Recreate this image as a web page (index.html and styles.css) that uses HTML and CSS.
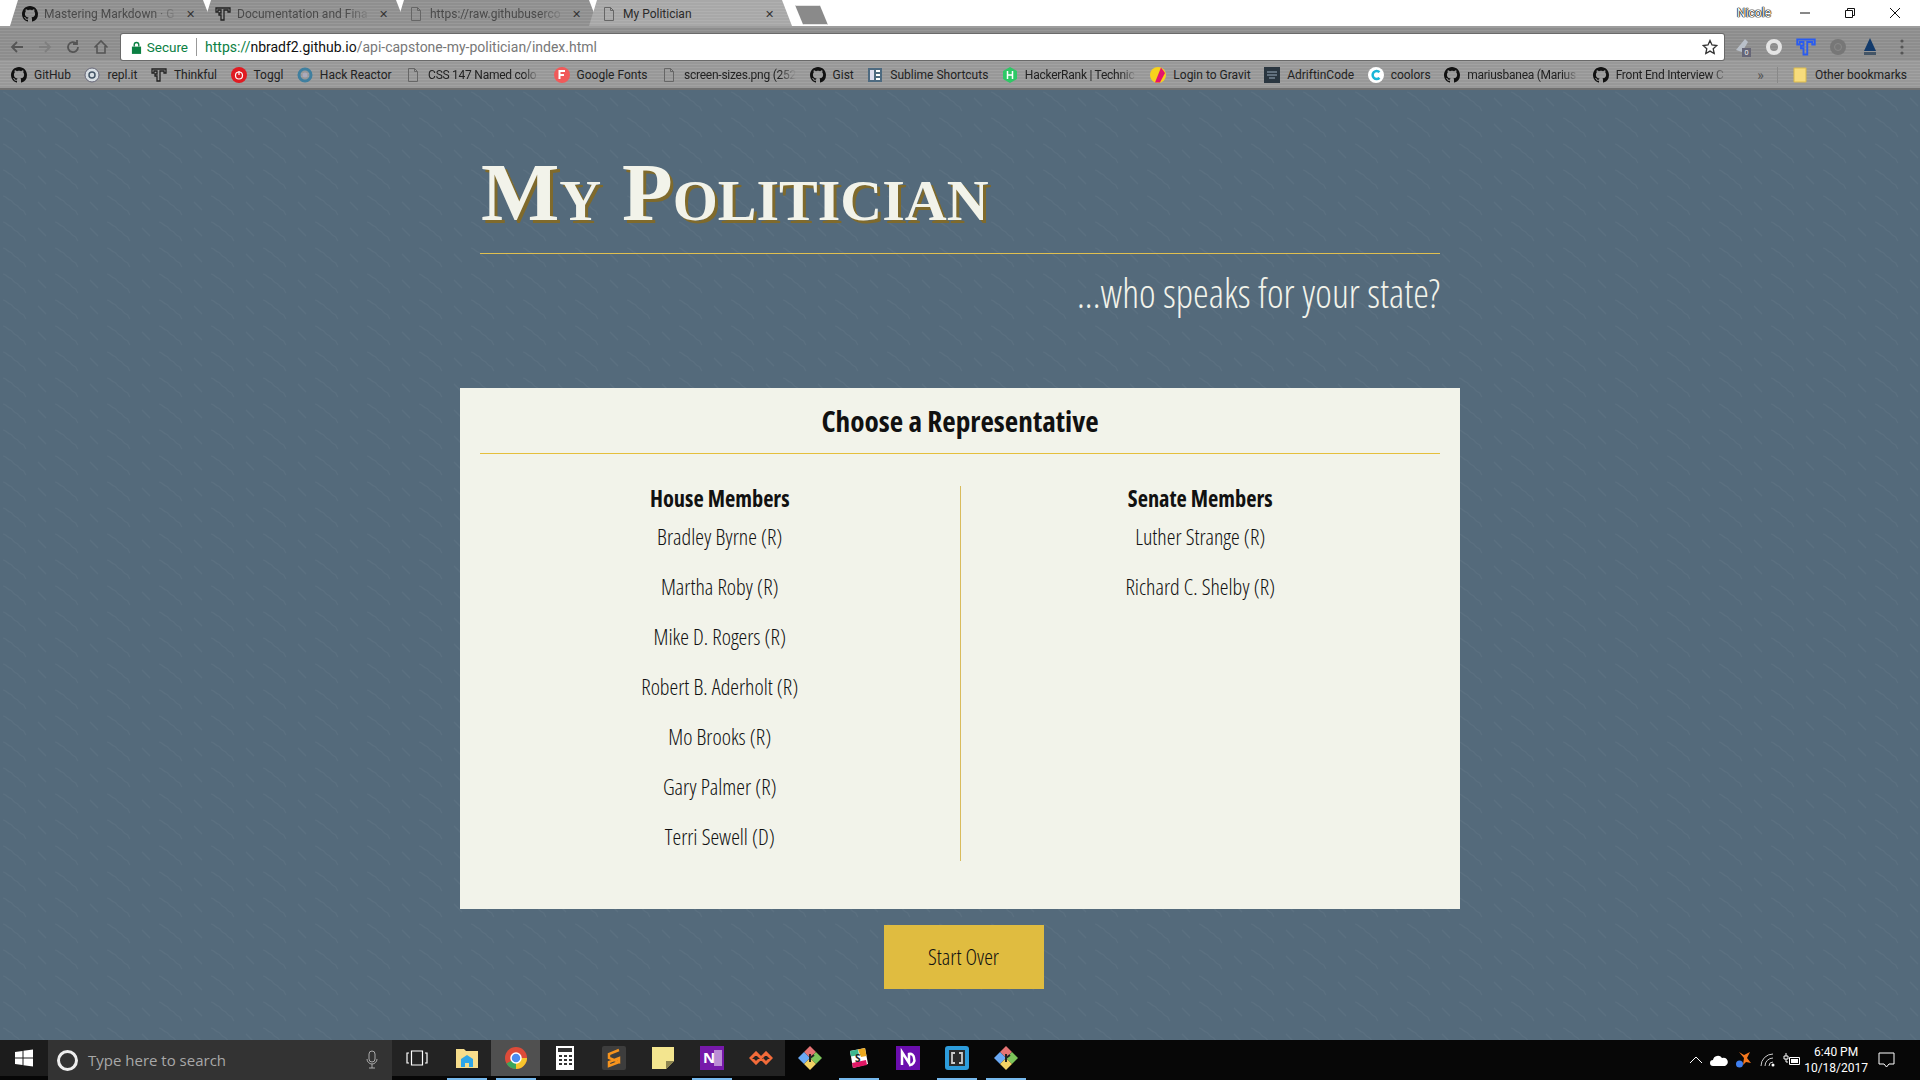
FILE: index.html
```html
<!DOCTYPE html>
<html lang="en">
<head>
<meta charset="UTF-8">
<title>My Politician</title>
<link rel="stylesheet" href="styles.css">
</head>
<body>
<svg class="defs" width="0" height="0">
    <symbol id="gh" viewBox="0 0 16 16"><path d="M8 0C3.58 0 0 3.58 0 8c0 3.54 2.29 6.53 5.47 7.59.4.07.55-.17.55-.38 0-.19-.01-.82-.01-1.49-2.01.37-2.53-.49-2.69-.94-.09-.23-.48-.94-.82-1.13-.28-.15-.68-.52-.01-.53.63-.01 1.08.58 1.23.82.72 1.21 1.87.87 2.33.66.07-.52.28-.87.51-1.07-1.78-.2-3.64-.89-3.64-3.95 0-.87.31-1.59.82-2.15-.08-.2-.36-1.02.08-2.12 0 0 .67-.21 2.2.82.64-.18 1.32-.27 2-.27s1.36.09 2 .27c1.53-1.04 2.2-.82 2.2-.82.44 1.1.16 1.92.08 2.12.51.56.82 1.27.82 2.15 0 3.07-1.87 3.75-3.65 3.95.29.25.54.73.54 1.48 0 1.07-.01 1.93-.01 2.2 0 .21.15.46.55.38A8.01 8.01 0 0 0 16 8c0-4.42-3.58-8-8-8z"/></symbol>
    <symbol id="page" viewBox="0 0 16 16"><path d="M3.5 1.5h6l3 3v10h-9z M9.500 1.500v3h3" fill="none" stroke="#666" stroke-width="1"/></symbol>
    <symbol id="thinkful" viewBox="0 0 16 16"><path d="M1 2h14v4h-2V4H9v10H6V9H4V7h2V4H3v2H1z" fill="none" stroke="currentColor" stroke-width="1.300"/></symbol>
    <symbol id="gitkraken" viewBox="0 0 24 24"><path d="M6 6L12 0l6 6-6 6z" fill="#e57373"/><path d="M12 12l6-6 6 6-6 6z" fill="#7cc45a"/><path d="M0 12l6-6 6 6-6 6z" fill="#6aa9f4"/><path d="M6 18l6-6 6 6-6 6z" fill="#f2d264"/><path d="M12 8v8M12 12l4-3" fill="none" stroke="#222" stroke-width="2"/></symbol>
</svg>

<div class="chrome">
    <div class="tabstrip">
        <div class="tab"><svg class="ico"><use href="#gh"/></svg><span class="tabtitle">Mastering Markdown · G</span><span class="x">✕</span></div>
        <div class="tab"><svg class="ico"><use href="#thinkful"/></svg><span class="tabtitle">Documentation and Fina</span><span class="x">✕</span></div>
        <div class="tab"><svg class="ico"><use href="#page"/></svg><span class="tabtitle">https://raw.githubuserco</span><span class="x">✕</span></div>
        <div class="tab active"><svg class="ico"><use href="#page"/></svg><span class="tabtitle">My Politician</span><span class="x">✕</span></div>
        <div class="newtab"></div>
        <div class="winbtns">
            <span class="user">Nicole</span>
            <svg class="wbtn" viewBox="0 0 12 12"><path d="M1 6h10" stroke="#111" fill="none"/></svg>
            <svg class="wbtn" viewBox="0 0 12 12"><path d="M1.500 3.500h7v7h-7z M3.500 3.500v-2h7v7h-2" stroke="#111" fill="none"/></svg>
            <svg class="wbtn" viewBox="0 0 12 12"><path d="M1 1l10 10M11 1L1 11" stroke="#111" fill="none"/></svg>
        </div>
    </div>

    <div class="toolbar">
        <div class="nav">
            <svg class="navico" viewBox="0 0 16 16"><path d="M14 8H3M8 3L3 8l5 5" fill="none" stroke="#555" stroke-width="1.800"/></svg>
            <svg class="navico" viewBox="0 0 16 16"><path d="M2 8h11M8 3l5 5-5 5" fill="none" stroke="#7f7f7f" stroke-width="1.800"/></svg>
            <svg class="navico" viewBox="0 0 16 16"><path d="M13 8a5 5 0 1 1-1.500-3.500M12 1v4H8" fill="none" stroke="#555" stroke-width="1.800"/></svg>
            <svg class="navico" viewBox="0 0 16 16"><path d="M1.500 8.500L8 2l6.500 6.500M4 7v7h8V7" fill="none" stroke="#555" stroke-width="1.600"/></svg>
        </div>
        <div class="omnibox">
            <svg class="lock" viewBox="0 0 12 14"><path d="M1 6h10v8H1z" fill="#0b8043"/><path d="M3.500 6V4a2.500 2.500 0 0 1 5 0v2" fill="none" stroke="#0b8043" stroke-width="1.500"/></svg>
            <span class="secure">Secure</span>
            <span class="omnisep"></span>
            <span class="url"><span class="scheme">https://</span><span class="host">nbradf2.github.io</span><span class="path">/api-capstone-my-politician/index.html</span></span>
            <svg class="star" viewBox="0 0 16 16"><path d="M8 1.500l2 4.500 4.800.5-3.600 3.200 1 4.800L8 12.100l-4.200 2.400 1-4.800L1.200 6.500 6 6z" fill="none" stroke="#333" stroke-width="1.300"/></svg>
        </div>
        <div class="exts">
            <svg class="ext" viewBox="0 0 20 20"><path d="M4 13L13 2l3 3-6 10z" fill="#b9c0c9"/><rect x="10" y="11" width="9" height="9" fill="#667"/><text class="applet badge" x="12.500" y="18">0</text></svg>
            <svg class="ext" viewBox="0 0 20 20"><circle cx="10" cy="10" r="6" fill="none" stroke="#e4e4e4" stroke-width="4"/></svg>
            <svg class="ext" viewBox="0 0 16 16"><path d="M1 2h14v4h-2V4H9v10H6V9H4V7h2V4H3v2H1z" fill="none" stroke="#2a5cf0" stroke-width="1.500"/></svg>
            <svg class="ext" viewBox="0 0 20 20"><circle cx="10" cy="10" r="8" fill="#777"/><circle cx="10" cy="10" r="3.500" fill="none" stroke="#8a8a8a"/></svg>
            <svg class="ext" viewBox="0 0 20 20"><path d="M10 1l6 13H4z" fill="#123a6b"/><rect x="4" y="15" width="12" height="3" fill="#456"/></svg>
            <svg class="ext" viewBox="0 0 20 20"><circle cx="10" cy="4" r="1.600" fill="#555"/><circle cx="10" cy="10" r="1.600" fill="#555"/><circle cx="10" cy="16" r="1.600" fill="#555"/></svg>
        </div>
    </div>

    <div class="bookmarks">
        <div class="bm"><svg class="ico"><use href="#gh"/></svg><span>GitHub</span></div>
        <div class="bm"><svg class="ico" viewBox="0 0 16 16"><circle cx="8" cy="8" r="7" fill="#d8dfe4" stroke="#667"/><circle cx="8" cy="8" r="3" fill="none" stroke="#456" stroke-width="1.500"/></svg><span>repl.it</span></div>
        <div class="bm"><svg class="ico"><use href="#thinkful"/></svg><span>Thinkful</span></div>
        <div class="bm"><svg class="ico" viewBox="0 0 16 16"><circle cx="8" cy="8" r="8" fill="#e01b22"/><circle cx="8" cy="8.500" r="3.500" fill="none" stroke="#fff" stroke-width="1.200"/><path d="M8 4v4" stroke="#fff" stroke-width="1.200"/></svg><span>Toggl</span></div>
        <div class="bm"><svg class="ico" viewBox="0 0 16 16"><circle cx="8" cy="8" r="6" fill="none" stroke="#3f7f9f" stroke-width="3"/><circle cx="8" cy="8" r="2.500" fill="#aab"/></svg><span>Hack Reactor</span></div>
        <div class="bm"><svg class="ico"><use href="#page"/></svg><span class="fade">CSS 147 Named colo</span></div>
        <div class="bm"><svg class="ico" viewBox="0 0 16 16"><circle cx="8" cy="8" r="8" fill="#f05a5a"/><path d="M5.500 12V4H11M5.500 8H10" fill="none" stroke="#fff" stroke-width="2"/></svg><span>Google Fonts</span></div>
        <div class="bm"><svg class="ico"><use href="#page"/></svg><span class="fade">screen-sizes.png (252</span></div>
        <div class="bm"><svg class="ico"><use href="#gh"/></svg><span>Gist</span></div>
        <div class="bm"><svg class="ico" viewBox="0 0 16 16"><rect x="1" y="1" width="14" height="14" fill="#4d6a80"/><rect x="3" y="3" width="4" height="10" fill="#dde"/><path d="M9 4h4M9 8h4M9 12h4" stroke="#fff" stroke-width="2"/></svg><span>Sublime Shortcuts</span></div>
        <div class="bm"><svg class="ico" viewBox="0 0 16 16"><path d="M8 0l7 4v8l-7 4-7-4V4z" fill="#2ec866"/><path d="M5.500 4v8M10.500 4v8M5.500 8h5" stroke="#fff" stroke-width="1.500"/></svg><span class="fade">HackerRank | Technic</span></div>
        <div class="bm"><svg class="ico" viewBox="0 0 16 16"><circle cx="8" cy="8" r="8" fill="#f7d21c"/><path d="M11 0.600L5 15.400 10 15.500 15 6z" fill="#e4146c"/></svg><span>Login to Gravit</span></div>
        <div class="bm"><svg class="ico" viewBox="0 0 16 16"><rect width="16" height="16" fill="#2a3640"/><path d="M3 5h10M3 8h10M5 11h6" stroke="#9ab" stroke-width="1"/></svg><span>AdriftinCode</span></div>
        <div class="bm"><svg class="ico" viewBox="0 0 16 16"><circle cx="8" cy="8" r="8" fill="#fff"/><path d="M11.500 5.200a4 4 0 1 0 0 5.600" fill="none" stroke="#1ab6d8" stroke-width="2.500"/></svg><span>coolors</span></div>
        <div class="bm"><svg class="ico"><use href="#gh"/></svg><span class="fade">mariusbanea (Marius</span></div>
        <div class="bm"><svg class="ico"><use href="#gh"/></svg><span class="fade">Front End Interview C</span></div>
        <div class="bmend">
            <span class="more">»</span>
            <span class="bmsep"></span>
            <div class="bm"><svg class="ico" viewBox="0 0 16 16"><path d="M2 1h12v14H2z" fill="#f7dc7c" stroke="#d8b84c"/></svg><span>Other bookmarks</span></div>
        </div>
    </div>
</div>

<div class="page">
    <div class="wrap">
        <header class="head">
            <h1>My Politician</h1>
            <h2>...who speaks for your state?</h2>
        </header>
        <section class="card">
            <h3>Choose a Representative</h3>
            <div class="cols">
                <div class="col">
                    <h4>House Members</h4>
                    <ul>
                        <li>Bradley Byrne (R)</li>
                        <li>Martha Roby (R)</li>
                        <li>Mike D. Rogers (R)</li>
                        <li>Robert B. Aderholt (R)</li>
                        <li>Mo Brooks (R)</li>
                        <li>Gary Palmer (R)</li>
                        <li>Terri Sewell (D)</li>
                    </ul>
                </div>
                <div class="col">
                    <h4>Senate Members</h4>
                    <ul>
                        <li>Luther Strange (R)</li>
                        <li>Richard C. Shelby (R)</li>
                    </ul>
                </div>
            </div>
        </section>
        <button class="restart">Start Over</button>
    </div>
</div>

<div class="taskbar">
    <div class="startbtn"><svg width="18" height="18" viewBox="0 0 18 18"><path d="M0 3l7.500-1v6.500H0z M8.500 1.800L18 .5v8H8.500z M0 9.500h7.500V16L0 15z M8.500 9.500H18v8l-9.500-1.300z" fill="#fff"/></svg></div>
    <div class="search">
        <span class="cortana"></span>
        <span class="searchtext">Type here to search</span>
        <svg class="mic" width="12" height="20" viewBox="0 0 12 20"><rect x="3" y="1" width="6" height="11" rx="3" fill="none" stroke="#aaa"/><path d="M1 9a5 5 0 0 0 10 0M6 14v4M3 18h6" fill="none" stroke="#aaa"/></svg>
    </div>
    <div class="taskapps">
        <div class="tview"><svg width="22" height="16" viewBox="0 0 22 16"><path d="M5.500 1h11v14h-11z M3 3H1v10h2 M19 3h2v10h-2" fill="none" stroke="#fff" stroke-width="1.200"/></svg></div>
        <div class="app on"><svg width="24" height="24" viewBox="0 0 24 24"><path d="M1 3h8l2 2h12v17H1z" fill="#f6dd8b"/><path d="M6 13l6-4 6 4v8h-4v-4h-4v4H6z" fill="#2ea6e8"/></svg></div>
        <div class="app on lit"><svg width="24" height="24" viewBox="0 0 24 24"><circle cx="12" cy="12" r="11" fill="#dd4b39"/><path d="M12 12L2.500 17.500A11 11 0 0 0 12 23z" fill="#3ba55c"/><path d="M12 12h11a11 11 0 0 1-11 11z" fill="#f7c52c"/><circle cx="12" cy="12" r="5" fill="#4a8cf0" stroke="#fff" stroke-width="1.500"/></svg></div>
        <div class="app"><svg width="18" height="24" viewBox="0 0 18 24"><rect width="18" height="24" fill="#fff"/><rect x="2" y="2" width="14" height="4" fill="#333"/><path d="M3 10h3M8 10h3M13 10h3M3 14h3M8 14h3M13 14h3M3 18h3M8 18h3M13 18h3" stroke="#333" stroke-width="2"/></svg></div>
        <div class="app"><svg width="24" height="24" viewBox="0 0 24 24"><rect width="24" height="24" rx="2" fill="#3d3d3d"/><path d="M17 4L7 8v4l10 4v-4L7 16v4l10-4" fill="none" stroke="#f7941d" stroke-width="2.500"/></svg></div>
        <div class="app"><svg width="22" height="22" viewBox="0 0 22 22"><path d="M0 0h22v14l-8 8H0z" fill="#f3e58f"/><path d="M22 14h-8v8z" fill="#8c8450"/></svg></div>
        <div class="app on"><svg width="24" height="24" viewBox="0 0 24 24"><rect width="24" height="24" fill="#7719aa"/><rect x="14" y="4" width="8" height="16" fill="#fff" opacity=".5"/><text class="applet" x="3" y="17">N</text></svg></div>
        <div class="app"><svg width="24" height="14" viewBox="0 0 24 14"><path d="M7 2L2 7l5 5 5-5 5 5 5-5-5-5-5 5z" fill="none" stroke="#f26b3a" stroke-width="3"/></svg></div>
        <div class="app dark"><svg width="24" height="24"><use href="#gitkraken"/></svg></div>
        <div class="app dark on"><svg width="20" height="20" viewBox="0 0 20 20"><path d="M1 3L16 0l3 16L4 20z" fill="#fff"/><path d="M1 3L9 1.500 10 7 2 8.500z" fill="#3eb890"/><path d="M9 1.500L16 0l1.500 8-5.500 1z" fill="#e9a820"/><path d="M4 20l14-3-1-5-14 3z" fill="#e01765"/><text class="applet small" x="6" y="14">S</text></svg></div>
        <div class="app dark"><svg width="24" height="24" viewBox="0 0 24 24"><rect width="24" height="24" fill="#6a0dad"/><path d="M6 19V6l7 11V8a4 4 0 0 1 5 4 5 5 0 0 1-5 7" fill="none" stroke="#fff" stroke-width="2.500"/></svg></div>
        <div class="app dark on"><svg width="24" height="24" viewBox="0 0 24 24"><rect width="24" height="24" rx="3" fill="#2d9cdb"/><rect x="4" y="4" width="16" height="16" fill="#2b2b2b"/><path d="M10 7H7v10h3M14 7h3v10h-3" fill="none" stroke="#ccc" stroke-width="1.800"/></svg></div>
        <div class="app dark on"><svg width="24" height="24"><use href="#gitkraken"/></svg></div>
    </div>
    <div class="tray">
        <svg width="14" height="8" viewBox="0 0 14 8"><path d="M1 7l6-6 6 6" fill="none" stroke="#fff"/></svg>
        <svg width="18" height="12" viewBox="0 0 18 12"><path d="M3 12a3 3 0 0 1 0-6 5 5 0 0 1 9-2 4 4 0 0 1 3 8z" fill="#fff"/></svg>
        <svg width="18" height="18" viewBox="0 0 18 18"><path d="M9 7L4 1l5 3 6-3-3 6 4 5-5-1-3 3z" fill="#f7781e"/><circle cx="4.500" cy="13" r="3.500" fill="#3f7ff0"/></svg>
        <svg width="16" height="14" viewBox="0 0 16 14"><path d="M1 13A12 12 0 0 1 13 1M5 13a8 8 0 0 1 8-8M9 13a4 4 0 0 1 4-4" fill="none" stroke="#ccc"/><circle cx="13" cy="12" r="1.500" fill="#fff"/></svg>
        <svg width="18" height="14" viewBox="0 0 18 14"><path d="M3 0v3M1 3h4v3H1zM3 6v3h2" stroke="#fff" fill="none"/><path d="M6.500 4.500h10v7h-10z" stroke="#fff" fill="none"/><rect x="8" y="6" width="7" height="4" fill="#fff"/></svg>
        <div class="clock"><span>6:40 PM</span><span>10/18/2017</span></div>
        <svg class="notif" width="18" height="16" viewBox="0 0 18 16"><path d="M1 1h15v11h-5l-2.500 3L6 12H1z" fill="none" stroke="#fff"/></svg>
    </div>
</div>
</body>
</html>
```

FILE: styles.css
```css
* {
    box-sizing: border-box;
}
html, body {
    margin: 0;
    height: 100%;
}
body {
    display: flex;
    flex-direction: column;
    width: 1920px;
    height: 1080px;
    overflow: hidden;
    font-family: "Open Sans", Arial, sans-serif;
}
.defs {
    position: absolute;
}
.ico {
    width: 16px;
    height: 16px;
    flex: none;
    color: #222;
    fill: #111;
}

/* browser chrome */
.chrome {
    flex: none;
    height: 90px;
    font-family: Roboto, Arial, sans-serif;
    font-size: 12px;
    color: #222;
}
.tabstrip {
    display: flex;
    align-items: flex-end;
    height: 28px;
    padding-left: 10px;
    background: #fff;
    border-bottom: 2px solid #9d9d9d;
}
.tab {
    display: flex;
    align-items: center;
    width: 203px;
    height: 26px;
    margin-right: -10px;
    padding: 2px 18px 0 12px;
    gap: 6px;
    color: #4a4a4a;
    background: repeating-linear-gradient(0deg, #8f8f8f 0, #8f8f8f 2px, #999 2px, #999 3px);
    clip-path: polygon(8px 0, calc(100% - 10px) 0, 100% 100%, 0 100%);
}
.tab.active {
    color: #2a2a2a;
    background: repeating-linear-gradient(0deg, #a8a8a8 0, #a8a8a8 2px, #b0b0b0 2px, #b0b0b0 3px);
}
.tabtitle {
    flex: 1;
    white-space: nowrap;
    overflow: hidden;
    -webkit-mask-image: linear-gradient(90deg, #000 80%, transparent);
    mask-image: linear-gradient(90deg, #000 80%, transparent);
}
.tab.active .tabtitle {
    -webkit-mask-image: none;
    mask-image: none;
}
.x {
    font-size: 11px;
    color: #333;
}
.newtab {
    width: 33px;
    height: 20px;
    margin: 0 0 1px 13px;
    background: #8a8a8a;
    border: 1px solid #e4e4e4;
    clip-path: polygon(0 0, 75% 0, 100% 100%, 25% 100%);
}
.winbtns {
    display: flex;
    align-items: center;
    align-self: stretch;
    margin-left: auto;
    padding-right: 19px;
    gap: 33px;
}
.user {
    margin-right: -5px;
    font-size: 12px;
    color: #fff;
    text-shadow: 0 0 1px #000, 0 0 1px #000, 0 0 1px #000, 0 0 1px #000;
}
.wbtn {
    width: 12px;
    height: 12px;
}
.toolbar {
    display: flex;
    align-items: center;
    height: 32px;
    padding: 6px 8px 0 9px;
    background: repeating-linear-gradient(0deg, #8d8d8d 0, #8d8d8d 2px, #979797 2px, #979797 3px);
}
.nav {
    display: flex;
    gap: 12px;
    width: 112px;
}
.navico {
    width: 16px;
    height: 16px;
}
.omnibox {
    display: flex;
    align-items: center;
    width: 1607px;
    height: 26px;
    padding: 0 6px 0 10px;
    background: #fff;
    border-radius: 2px;
    box-shadow: 0 0 0 1px #6a6a6a;
    font-size: 14px;
}
.lock {
    width: 11px;
    height: 13px;
}
.secure {
    margin-left: 5px;
    color: #0b8043;
    font-size: 13.500px;
}
.omnisep {
    width: 1px;
    height: 18px;
    margin: 0 8px;
    background: #999;
}
.scheme {
    color: #0b8043;
}
.host {
    color: #111;
}
.path {
    color: #777;
}
.url {
    flex: 1;
}
.star {
    width: 16px;
    height: 16px;
}
.exts {
    display: flex;
    align-items: center;
    gap: 12px;
    margin-left: 8px;
}
.ext {
    width: 20px;
    height: 20px;
}
.bookmarks {
    display: flex;
    align-items: center;
    gap: 13.500px;
    height: 30px;
    padding: 2px 13px 0 11px;
    background: repeating-linear-gradient(0deg, #989898 0, #989898 2px, #a2a2a2 2px, #a2a2a2 3px);
    border-bottom: 2px solid #707070;
}
.bm {
    display: flex;
    align-items: center;
    gap: 7px;
    white-space: nowrap;
}
.fade {
    width: 112px;
    overflow: hidden;
    letter-spacing: -.25px;
    -webkit-mask-image: linear-gradient(90deg, #000 85%, transparent);
    mask-image: linear-gradient(90deg, #000 85%, transparent);
}
.bmend {
    display: flex;
    align-items: center;
    margin-left: auto;
}
.more {
    color: #555;
    font-size: 14px;
}
.bmsep {
    width: 1px;
    height: 16px;
    margin: 0 14px 0 13px;
    background: #888;
}

/* page */
.page {
    flex: 1;
    background-color: #546a7b;
    background-image: url("data:image/svg+xml,%3Csvg xmlns='http://www.w3.org/2000/svg' width='52' height='26'%3E%3Cpath d='M3 2c3 0 4 3 7 4s3 4 6 5 3 4 6 5 2 3 4 5M38 8l8 8' fill='none' stroke='%23fff' stroke-opacity='.04' stroke-width='1.200'/%3E%3C/svg%3E");
}
.wrap {
    display: flex;
    flex-direction: column;
    align-items: center;
    width: 1000px;
    margin: 0 auto;
}
.head {
    width: 960px;
}
h1 {
    margin: 0;
    padding: 52px 0 11px 1px;
    font-family: "Liberation Serif", serif;
    font-size: 83px;
    font-weight: bold;
    font-variant: small-caps;
    line-height: 100px;
    color: #f2f3ea;
    text-shadow: 3px 3px 0 #7f6a2c;
    border-bottom: 1px solid #e0bf50;
}
h2, h3, h4, li, .restart {
    font-family: "Open Sans", sans-serif;
    font-stretch: 75%;
}
h2 {
    margin: 0;
    padding-top: 14px;
    font-size: 39.600px;
    font-weight: 300;
    line-height: 50px;
    text-align: right;
    color: #f2f3ea;
}
.card {
    width: 1000px;
    height: 521px;
    margin-top: 70px;
    padding: 0 20px;
    background: #f2f3ea;
    color: #111;
}
h3 {
    margin: 0;
    height: 66px;
    font-size: 29.300px;
    font-weight: bold;
    line-height: 66px;
    text-align: center;
    border-bottom: 1px solid #e5bf3c;
}
.cols {
    display: flex;
    margin-top: 32px;
    height: 375px;
}
.col {
    flex: 1;
    text-align: center;
}
.col:first-child {
    border-right: 1px solid #d9bb5c;
}
h4 {
    margin: 0;
    font-size: 22.400px;
    font-weight: bold;
    line-height: 26px;
}
ul {
    list-style: none;
    margin: 0;
    padding: 0;
}
li {
    height: 50px;
    padding-top: 10px;
    font-size: 22px;
    font-weight: 300;
    line-height: 29px;
}
.restart {
    width: 160px;
    height: 64px;
    margin: 16px 0 0 7px;
    padding-bottom: 3px;
    border: none;
    background: #e0bc40;
    color: #111;
    font-size: 22px;
    font-weight: 300;
}

/* windows taskbar */
.taskbar {
    flex: none;
    display: flex;
    height: 40px;
    background: #070707;
    color: #fff;
}
.startbtn {
    display: flex;
    align-items: center;
    justify-content: center;
    width: 48px;
    height: 36px;
    background: #1c1c1c;
}
.search {
    display: flex;
    align-items: center;
    width: 344px;
    padding: 0 14px 0 9px;
    background: #333;
    color: #a8a8a8;
    font-size: 15px;
}
.cortana {
    width: 21px;
    height: 21px;
    border: 3px solid #eee;
    border-radius: 50%;
}
.searchtext {
    flex: 1;
    margin-left: 10px;
}
.taskapps {
    display: flex;
}
.tview {
    display: flex;
    align-items: center;
    justify-content: center;
    width: 50px;
    height: 36px;
    background: #232323;
}
.app {
    position: relative;
    display: flex;
    align-items: center;
    justify-content: center;
    width: 49px;
    height: 36px;
    background: #232323;
}
.app.dark {
    background: none;
}
.app.lit {
    background: #505050;
}
.app.on::after {
    content: "";
    position: absolute;
    left: 5px;
    right: 4px;
    bottom: -4px;
    height: 2px;
    background: #76b9ed;
}
.applet {
    font-family: "Open Sans", sans-serif;
    font-size: 15px;
    font-weight: bold;
    fill: #fff;
}
.applet.small {
    font-size: 10px;
    fill: #222;
}
.applet.badge {
    font-size: 7px;
    font-weight: normal;
}
.tray {
    display: flex;
    align-items: center;
    gap: 7px;
    margin-left: auto;
    padding-right: 24px;
}
.clock {
    display: flex;
    flex-direction: column;
    align-items: center;
    margin: 0 3px 0 -4px;
    font-family: Roboto, Arial, sans-serif;
    font-size: 12px;
    line-height: 16px;
}
```
